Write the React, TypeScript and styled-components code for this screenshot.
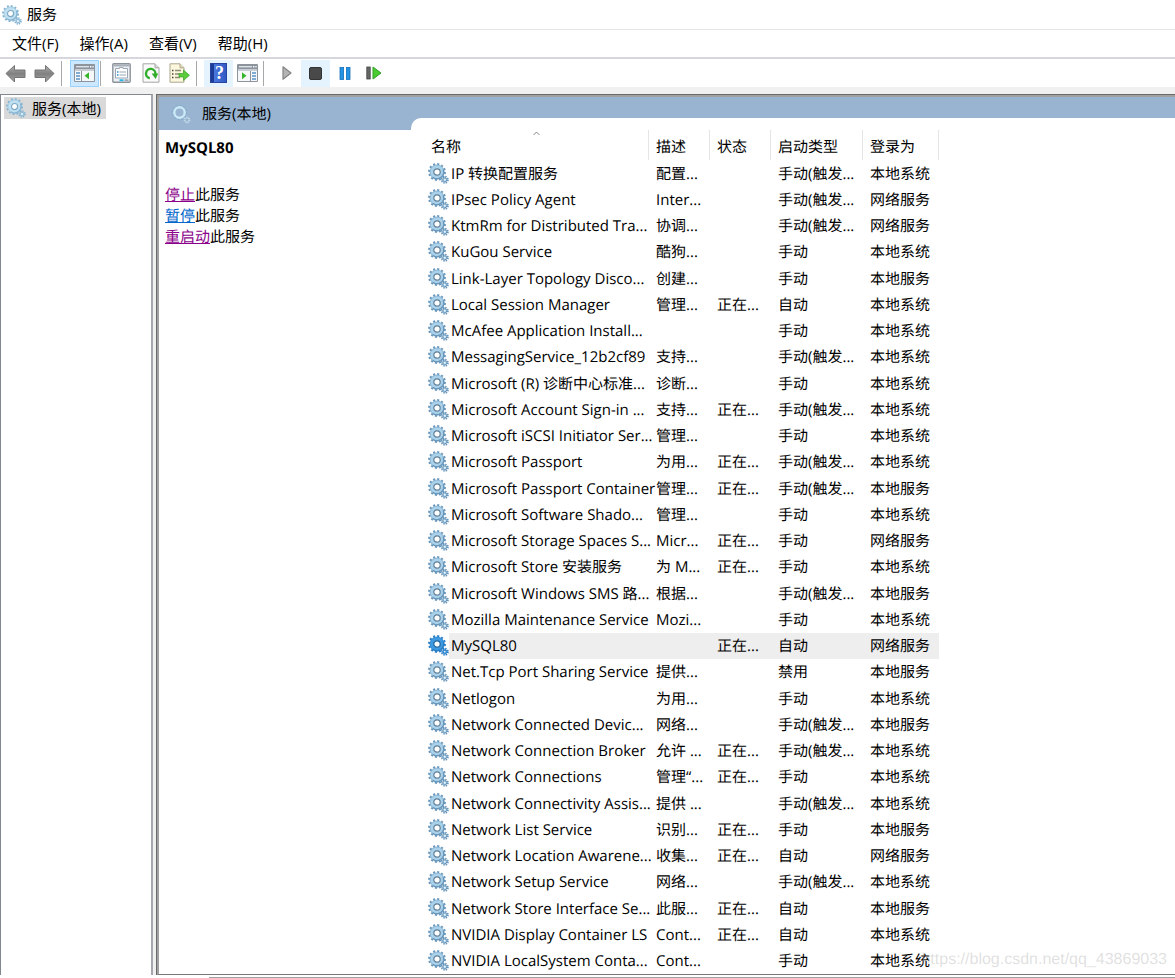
import React from "react";
import styled, { createGlobalStyle, css } from "styled-components";

const GlobalStyle = createGlobalStyle`
  * { box-sizing: border-box; }
  body {
    margin: 0;
    background: #fff;
    color: #000;
    font: 15px/20px "Open Sans", "Noto Sans CJK SC", sans-serif;
    text-rendering: geometricPrecision;
  }
  button { font: inherit; color: inherit; background: none; border: 0; padding: 0; }
  svg { display: block; flex: none; }
`;

const Window = styled.div`
  display: flex;
  flex-direction: column;
  min-height: 100vh;
  position: relative;
`;

const TitleBar = styled.header`
  display: flex;
  align-items: center;
  gap: 5px;
  height: 29px;
  padding-left: 2px;
`;

const WindowTitle = styled.h1`
  margin: 0;
  font-size: 15px;
  font-weight: 400;
`;

const MenuBar = styled.nav`
  display: flex;
  align-items: center;
  gap: 21px;
  height: 28px;
  padding: 0 0 2px 12px;
  border-top: 1px solid #e6e6e6;
`;

const MenuButton = styled.button`
  white-space: nowrap;
`;

const Toolbar = styled.div`
  display: flex;
  align-items: center;
  height: 30px;
  padding-left: 1px;
  border-top: 2px solid #d5d7dc;
`;

const ToolButton = styled.button<{ $state?: "on" | "enabled" }>`
  display: grid;
  place-items: center;
  width: 29px;
  height: 27px;
  border: 1px solid transparent;
  ${({ $state }) => $state === "on" && css`background: #cce8ff; border-color: #99d1ff;`}
  ${({ $state }) => $state === "enabled" && css`background: #e5f3ff;`}
`;

const Divider = styled.span<{ $before: number; $after: number }>`
  width: 1px;
  height: 25px;
  background: #a8a8a8;
  margin-left: ${(p) => p.$before}px;
  margin-right: ${(p) => p.$after}px;
`;

const Workspace = styled.div`
  flex: 1;
  display: grid;
  grid-template-columns: 153px minmax(0, 1fr);
  gap: 3px;
  padding-top: 7px;
  background: #f0f0f0;
`;

const TreePane = styled.aside`
  background: #fff;
  border: 1px solid #828790;
  border-right: 2px solid #a5a8b0;
  border-bottom: 0;
  padding: 2px 3px;
`;

const TreeItem = styled.button`
  display: flex;
  align-items: center;
  gap: 6px;
  height: 22px;
  padding: 0 5px 0 2px;
  background: #d9d9d9;
  white-space: nowrap;
`;

const MainPane = styled.main`
  display: flex;
  flex-direction: column;
  background: #fff;
  border: solid #696969;
  border-width: 1px 0 0 1px;
`;

const MainInner = styled.div`
  flex: 1;
  display: flex;
  flex-direction: column;
  border: solid #a0a0a0;
  border-width: 2px 0 1px 2px;
  border-bottom-color: #777;
`;

const Band = styled.div`
  display: grid;
  grid-template-columns: 252px minmax(0, 1fr);
  height: 33px;
  background: #99b4d1;
`;

const BandTitle = styled.h2`
  display: flex;
  align-items: center;
  gap: 11px;
  margin: 0;
  padding-left: 12px;
  font-size: 15px;
  font-weight: 400;
`;

const BandTab = styled.div`
  align-self: end;
  height: 12px;
  background: #fff;
  border-top-left-radius: 10px;
`;

const Content = styled.div`
  flex: 1;
  display: grid;
  grid-template-columns: 252px minmax(0, 1fr);
`;

const Details = styled.section`
  padding: 8px 6px;
  line-height: 21px;
`;

const ServiceName = styled.h3`
  margin: 0 0 26px;
  font-size: 15px;
  font-weight: 700;
`;

const Action = styled.p`
  margin: 0;
`;

const ActionLink = styled.a<{ $visited?: boolean }>`
  color: ${(p) => (p.$visited ? "#8b008b" : "#0066cc")};
  text-decoration: underline;
`;

const ListArea = styled.section`
  display: grid;
  justify-content: start;
  padding-left: 16px;
`;

const Table = styled.table`
  table-layout: fixed;
  width: 512px;
  border-collapse: separate;
  border-spacing: 0;
`;

const HeadCell = styled.th<{ $first?: boolean }>`
  height: 30px;
  padding: 3px 0 0 ${(p) => (p.$first ? 4 : 7)}px;
  border-right: 1px solid #e5e5e5;
  text-align: left;
  font-weight: 400;
  position: relative;
`;

const SortMark = styled.svg`
  position: absolute;
  top: 1px;
  left: 50%;
  margin-left: -5px;
`;

const Row = styled.tr<{ $selected: boolean }>`
  height: 26px;
  td + td { background: ${(p) => (p.$selected ? "#eee" : "transparent")}; }
`;

const IconCell = styled.td`
  padding: 0 0 0 1px;
`;

const Cell = styled.td<{ $name?: boolean }>`
  padding: 1px 0 0 ${(p) => (p.$name ? 2 : 7)}px;
  white-space: nowrap;
`;

const Footer = styled.footer`
  height: 3px;
  margin-left: 209px;
  border-bottom: 1px solid #a0a0a0;
`;

const Watermark = styled.div`
  position: absolute;
  right: 8px;
  bottom: 8px;
  color: rgba(150, 150, 150, 0.3);
  font-family: "Liberation Sans", sans-serif;
  font-size: 16px;
  pointer-events: none;
`;

type GearTone = "list" | "pale" | "active";
const gearTones: Record<GearTone, { edge: string; fill: string; ring: string }> = {
  list: { edge: "#6896ba", fill: "#a9d1ea", ring: "#5f7f99" },
  pale: { edge: "#86b4d3", fill: "#bfe0f1", ring: "#7fa9c4" },
  active: { edge: "#2a7fc6", fill: "#3e9ae0", ring: "#20659f" },
};

const Gears = ({ tone = "list", size = 21 }: { tone?: GearTone; size?: number }) => {
  const c = gearTones[tone];
  return (
    <svg width={size} height={size} viewBox="0 0 21 21" aria-hidden="true">
      <circle cx="9" cy="9" r="7.7" fill="none" stroke={c.edge} strokeWidth="2.4" strokeDasharray="2 2.03" />
      <circle cx="9" cy="9" r="5.2" fill="none" stroke={c.fill} strokeWidth="4.2" />
      <path d="M15.2 6.4A6.8 6.8 0 0 1 5 14.5" fill="none" stroke={c.edge} strokeWidth="1.4" />
      <circle cx="9" cy="9" r="7" fill="none" stroke={c.edge} strokeWidth="0.5" />
      <circle cx="9" cy="9" r="3.2" fill="#fff" stroke={c.ring} strokeWidth="1.2" />
      <circle cx="16.8" cy="16.8" r="3.1" fill="none" stroke={c.edge} strokeWidth="1.8" strokeDasharray="1.4 1.03" />
      <circle cx="16.8" cy="16.8" r="2" fill={c.fill} stroke={c.edge} strokeWidth="1" />
      <circle cx="16.8" cy="16.8" r="0.8" fill="#fff" />
    </svg>
  );
};

const BandGears = () => (
  <svg width="20" height="20" viewBox="0 0 20 20" aria-hidden="true">
    <circle cx="8.5" cy="8.5" r="6.8" fill="none" stroke="#86aecb" strokeWidth="2" strokeDasharray="2 1.56" />
    <circle cx="8.5" cy="8.5" r="5.2" fill="none" stroke="#cbe9f7" strokeWidth="2.4" />
    <circle cx="16" cy="16" r="2.4" fill="none" stroke="#c2dbe9" strokeWidth="2" strokeDasharray="1.2 0.7" />
  </svg>
);

const Arrow = ({ right }: { right?: boolean }) => (
  <svg width="21" height="19" viewBox="0 0 21 19" aria-hidden="true">
    <defs>
      <linearGradient id={right ? "ar" : "al"} x1="0" x2="0" y1="0" y2="1">
        <stop offset="0" stopColor="#b0b0b0" />
        <stop offset="0.5" stopColor="#808080" />
        <stop offset="1" stopColor="#a8a8a8" />
      </linearGradient>
    </defs>
    <path
      d={right ? "M20 9.5 11.5 1.5V6H1v7.5h10.5V18z" : "M1 9.5 9.5 1.5V6H20v7.5H9.5V18z"}
      fill={`url(#${right ? "ar" : "al"})`}
      stroke="#757575"
      strokeLinejoin="round"
    />
  </svg>
);

const PaneIcon = ({ flipped }: { flipped?: boolean }) => (
  <svg width="21" height="18" viewBox="0 0 21 18" aria-hidden="true">
    <path d="M.5.5h20v17H.5z" fill="#f6f7f8" stroke="#8d949c" />
    <path d="M1 1h19v4H1z" fill="#8b939d" />
    <path d="M2 2h13v1.4H2z" fill="#dfe3e8" />
    <path d="M16 2h1.4v1.4H16zM18.4 2h1.2v1.4h-1.2z" fill="#fff" />
    <path d="M1 5h19v2H1z" fill="#c9ced5" />
    {flipped ? (
      <>
        <path d="M13.5 7v10" stroke="#8d949c" />
        <path d="M15 9h4M15 12h4M15 15h4" stroke="#5a92c8" strokeWidth="1.4" />
        <path d="M5 8.2v7l4.5-3.5z" fill="#35b52b" />
      </>
    ) : (
      <>
        <path d="M7.5 7v10" stroke="#8d949c" />
        <path d="M2 9h4M2 12h4M2 15h4" stroke="#5a92c8" strokeWidth="1.4" />
        <path d="M15 8.2v7l-4.5-3.5z" fill="#35b52b" />
      </>
    )}
  </svg>
);

const PropertiesIcon = () => (
  <svg width="19" height="20" viewBox="0 0 19 20" aria-hidden="true">
    <rect x=".8" y=".8" width="17.4" height="18.4" rx="1" fill="#eef1f4" stroke="#8c939b" strokeWidth="1.4" />
    <path d="M1.5 2.5h16" stroke="#aab0b8" strokeWidth="2" />
    <path d="M3.5 5.5h4V4.5H11v1h4.5v9.5h-12z" fill="#fff" stroke="#9aa6b5" />
    <path d="M5 9h1.5M5 12h1.5" stroke="#2d8fd8" strokeWidth="1.3" />
    <path d="M7.5 9H14M7.5 12H14" stroke="#9aa6b5" strokeWidth="1.2" />
    <path d="M7.5 17.2h4" stroke="#25b6e8" strokeWidth="1.8" />
    <path d="M12.5 17.2h4" stroke="#9ca6b2" strokeWidth="1.8" />
  </svg>
);

const RefreshIcon = () => (
  <svg width="18" height="20" viewBox="0 0 18 20" aria-hidden="true">
    <path d="M1 .8h12l4 4v14.4H1z" fill="#fafafa" stroke="#a5a5a5" />
    <path d="M13 .8v4h4" fill="#ddd" stroke="#a5a5a5" />
    <path d="M7.8 15.2A4.7 4.7 0 1 1 13.4 11" fill="none" stroke="#30ad2b" strokeWidth="2.4" />
    <path d="M9.6 10.4h6.6l-2.6 5.6z" fill="#30ad2b" />
  </svg>
);

const ExportIcon = () => (
  <svg width="21" height="20" viewBox="0 0 21 20" aria-hidden="true">
    <path d="M1 .8h10l4 4v14.4H1z" fill="#fdf8dd" stroke="#aaa58d" />
    <path d="M11 .8v4h4" fill="#e8e1bd" stroke="#aaa58d" />
    <path d="M3 7.5h1.5M3 11h1.5M3 14.5h1.5" stroke="#444" strokeWidth="1.4" />
    <path d="M6 7.5h6M6 11h5M6 14.5h5" stroke="#8b8c78" strokeWidth="1.4" />
    <path d="M10 10.5h4.5V7l6 5.3-6 5.2V14H10z" fill="#5ccb3c" stroke="#3aa32a" strokeWidth=".7" />
  </svg>
);

const QuestionMark = styled.span`
  display: grid;
  place-items: center;
  width: 17px;
  height: 20px;
  color: #fff;
  background: linear-gradient(90deg, #1c3c98 3px, #4a78dd 3px, #3158c4);
  border: 1px solid #2745a0;
  font: 700 18px/18px "Liberation Serif", serif;
  padding-left: 2px;
`;

const PlayIcon = () => (
  <svg width="12" height="16" viewBox="0 0 12 16" aria-hidden="true">
    <path d="M2 1.8 10 8l-8 6.2z" fill="#b4b4b4" stroke="#858585" strokeWidth="1.2" strokeLinejoin="round" />
  </svg>
);

const StopIcon = () => (
  <svg width="13" height="13" viewBox="0 0 13 13" aria-hidden="true">
    <rect x=".5" y=".5" width="12" height="12" rx="1.5" fill="#494949" stroke="#333" />
  </svg>
);

const PauseIcon = () => (
  <svg width="12" height="13" viewBox="0 0 12 13" aria-hidden="true">
    <rect x="1" y=".5" width="3.6" height="12" fill="#2593e4" stroke="#1670bb" strokeWidth=".8" />
    <rect x="7.4" y=".5" width="3.6" height="12" fill="#2593e4" stroke="#1670bb" strokeWidth=".8" />
  </svg>
);

const RestartIcon = () => (
  <svg width="16" height="14" viewBox="0 0 16 14" aria-hidden="true">
    <rect x=".8" y="1" width="3.4" height="12" fill="#666" stroke="#444" strokeWidth=".8" />
    <path d="M7 1v12l8-6z" fill="#4bcb32" stroke="#30a122" strokeLinejoin="round" />
  </svg>
);

const SYS = "本地系统";
const LOC = "本地服务";
const NET = "网络服务";
const MAN = "手动";
const TRG = "手动(触发...";
const AUTO = "自动";
const RUN = "正在...";

type Service = [name: string, description: string, status: string, startup: string, account: string];

const services: Service[] = [
  ["IP 转换配置服务", "配置...", "", TRG, SYS],
  ["IPsec Policy Agent", "Inter...", "", TRG, NET],
  ["KtmRm for Distributed Tra...", "协调...", "", TRG, NET],
  ["KuGou Service", "酷狗...", "", MAN, SYS],
  ["Link-Layer Topology Disco...", "创建...", "", MAN, LOC],
  ["Local Session Manager", "管理...", RUN, AUTO, SYS],
  ["McAfee Application Install...", "", "", MAN, SYS],
  ["MessagingService_12b2cf89", "支持...", "", TRG, SYS],
  ["Microsoft (R) 诊断中心标准...", "诊断...", "", MAN, SYS],
  ["Microsoft Account Sign-in ...", "支持...", RUN, TRG, SYS],
  ["Microsoft iSCSI Initiator Ser...", "管理...", "", MAN, SYS],
  ["Microsoft Passport", "为用...", RUN, TRG, SYS],
  ["Microsoft Passport Container", "管理...", RUN, TRG, LOC],
  ["Microsoft Software Shado...", "管理...", "", MAN, SYS],
  ["Microsoft Storage Spaces S...", "Micr...", RUN, MAN, NET],
  ["Microsoft Store 安装服务", "为 M...", RUN, MAN, SYS],
  ["Microsoft Windows SMS 路...", "根据...", "", TRG, LOC],
  ["Mozilla Maintenance Service", "Mozi...", "", MAN, SYS],
  ["MySQL80", "", RUN, AUTO, NET],
  ["Net.Tcp Port Sharing Service", "提供...", "", "禁用", LOC],
  ["Netlogon", "为用...", "", MAN, SYS],
  ["Network Connected Devic...", "网络...", "", TRG, LOC],
  ["Network Connection Broker", "允许 ...", RUN, TRG, SYS],
  ["Network Connections", "管理“...", RUN, MAN, SYS],
  ["Network Connectivity Assis...", "提供 ...", "", TRG, SYS],
  ["Network List Service", "识别...", RUN, MAN, LOC],
  ["Network Location Awarene...", "收集...", RUN, AUTO, NET],
  ["Network Setup Service", "网络...", "", TRG, SYS],
  ["Network Store Interface Se...", "此服...", RUN, AUTO, LOC],
  ["NVIDIA Display Container LS", "Cont...", RUN, AUTO, SYS],
  ["NVIDIA LocalSystem Conta...", "Cont...", "", MAN, SYS],
];

const selectedService = "MySQL80";

const actions = [
  { verb: "停止", visited: true },
  { verb: "暂停", visited: false },
  { verb: "重启动", visited: true },
];

export default function App() {
  return (
    <>
      <GlobalStyle />
      <Window>
        <TitleBar>
          <Gears tone="pale" size={20} />
          <WindowTitle>服务</WindowTitle>
        </TitleBar>
        <MenuBar aria-label="菜单">
          {["文件(F)", "操作(A)", "查看(V)", "帮助(H)"].map((m) => (
            <MenuButton key={m}>{m}</MenuButton>
          ))}
        </MenuBar>
        <Toolbar role="toolbar" aria-label="工具栏">
          <ToolButton aria-label="后退"><Arrow /></ToolButton>
          <ToolButton aria-label="前进"><Arrow right /></ToolButton>
          <Divider $before={2} $after={8} />
          <ToolButton $state="on" aria-label="显示/隐藏控制台树"><PaneIcon /></ToolButton>
          <Divider $before={1} $after={6} />
          <ToolButton aria-label="属性"><PropertiesIcon /></ToolButton>
          <ToolButton aria-label="刷新"><RefreshIcon /></ToolButton>
          <ToolButton aria-label="导出列表"><ExportIcon /></ToolButton>
          <Divider $before={2} $after={7} />
          <ToolButton $state="enabled" aria-label="帮助"><QuestionMark>?</QuestionMark></ToolButton>
          <ToolButton aria-label="显示/隐藏操作窗格"><PaneIcon flipped /></ToolButton>
          <Divider $before={1} $after={8} />
          <ToolButton aria-label="启动服务"><PlayIcon /></ToolButton>
          <ToolButton $state="enabled" aria-label="停止服务"><StopIcon /></ToolButton>
          <ToolButton aria-label="暂停服务"><PauseIcon /></ToolButton>
          <ToolButton aria-label="重启动服务"><RestartIcon /></ToolButton>
        </Toolbar>
        <Workspace>
          <TreePane>
            <TreeItem>
              <Gears tone="pale" size={20} />
              服务(本地)
            </TreeItem>
          </TreePane>
          <MainPane>
            <MainInner>
              <Band>
                <BandTitle>
                  <BandGears />
                  服务(本地)
                </BandTitle>
                <BandTab />
              </Band>
              <Content>
                <Details>
                  <ServiceName>{selectedService}</ServiceName>
                  {actions.map((a) => (
                    <Action key={a.verb}>
                      <ActionLink href="#" $visited={a.visited}>{a.verb}</ActionLink>此服务
                    </Action>
                  ))}
                </Details>
                <ListArea>
                  <Table>
                    <colgroup>
                      <col width="22" />
                      <col width="200" />
                      <col width="61" />
                      <col width="61" />
                      <col width="92" />
                      <col width="76" />
                    </colgroup>
                    <thead>
                      <tr>
                        <HeadCell colSpan={2} $first aria-sort="ascending">
                          名称
                          <SortMark width="7" height="5" viewBox="0 0 7 5" aria-hidden="true">
                            <path d="M.5 4 3.5 1l3 3" fill="none" stroke="#888" />
                          </SortMark>
                        </HeadCell>
                        <HeadCell>描述</HeadCell>
                        <HeadCell>状态</HeadCell>
                        <HeadCell>启动类型</HeadCell>
                        <HeadCell>登录为</HeadCell>
                      </tr>
                    </thead>
                    <tbody>
                      {services.map(([name, description, status, startup, account]) => (
                        <Row key={name} $selected={name === selectedService}>
                          <IconCell>
                            <Gears tone={name === selectedService ? "active" : "list"} />
                          </IconCell>
                          <Cell $name>{name}</Cell>
                          <Cell>{description}</Cell>
                          <Cell>{status}</Cell>
                          <Cell>{startup}</Cell>
                          <Cell>{account}</Cell>
                        </Row>
                      ))}
                    </tbody>
                  </Table>
                </ListArea>
              </Content>
            </MainInner>
          </MainPane>
        </Workspace>
        <Footer />
        <Watermark>https://blog.csdn.net/qq_43869033</Watermark>
      </Window>
    </>
  );
}
